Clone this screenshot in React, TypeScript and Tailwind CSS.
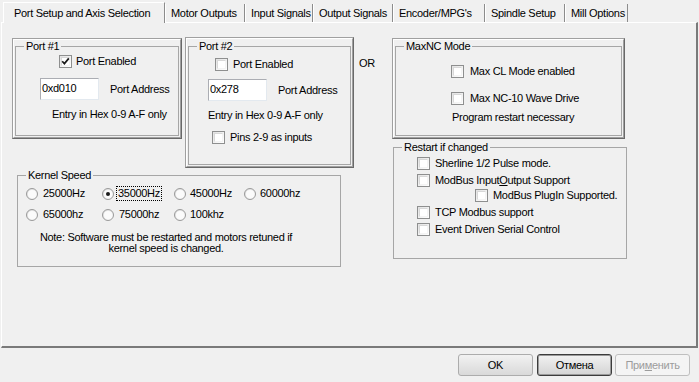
import React from "react";

function Check({ checked = false }: { checked?: boolean }) {
  return (
    <span className="relative inline-block w-[13px] h-[13px] shrink-0 border border-[#8e8f8f] bg-gradient-to-br from-[#e2e2e2] to-[#ffffff]">
      <span className="absolute inset-[1px] bg-white border border-t-[#d8d8d8] border-l-[#d8d8d8] border-r-[#f4f4f4] border-b-[#f4f4f4]" />
      {checked && (
        <svg className="absolute left-[1px] top-[1px]" width="9" height="9" viewBox="0 0 9 9">
          <path d="M1.2 4.2 L3.4 6.6 L7.8 1.4" fill="none" stroke="#1a1a1a" strokeWidth="1.7" />
        </svg>
      )}
    </span>
  );
}

function Radio({ on = false }: { on?: boolean }) {
  return (
    <span className="relative inline-block w-[12px] h-[12px] shrink-0 rounded-full border border-[#9a9a9a] bg-gradient-to-br from-[#dcdcdc] to-[#ffffff]">
      <span className="absolute inset-[1px] rounded-full bg-[#fbfbfb]" />
      {on && <span className="absolute left-[3px] top-[3px] w-[4px] h-[4px] rounded-full bg-[#1b1b1b]" />}
    </span>
  );
}

function Group({
  label,
  className,
  children,
}: {
  label: string;
  className?: string;
  children?: React.ReactNode;
}) {
  return (
    <div className={"relative border border-[#a6a6a6] " + (className ?? "")}>
      <span className="absolute -top-[7px] left-[8px] px-[2px] bg-[#f0f0f0] leading-[13px]">{label}</span>
      {children}
    </div>
  );
}

function Frame({ className, children }: { className?: string; children?: React.ReactNode }) {
  return (
    <div className={"flex border border-t-[#a0a0a0] border-l-[#a0a0a0] border-r-[#696969] border-b-[#696969] " + (className ?? "")}>
      <div className="flex-1 flex flex-col border border-t-white border-l-white border-r-[#a0a0a0] border-b-[#a0a0a0]">
        {children}
      </div>
    </div>
  );
}

function TextBox({ value }: { value: string }) {
  return (
    <div className="w-[59px] h-[22px] shrink-0 bg-white border border-[#abadb3] border-r-[#e3e9ef] border-b-[#e3e9ef] pl-[1px] pt-[3px] leading-[13px]">
      {value}
    </div>
  );
}

function Btn({ children, variant }: { children: React.ReactNode; variant?: "default" | "disabled" }) {
  const base =
    "w-[75px] h-[22px] flex items-center justify-center rounded-[3px] leading-[13px] bg-gradient-to-b ";
  if (variant === "default")
    return (
      <div className={base + "border border-[#3c3c3c] from-[#f2f2f2] to-[#d4d4d4] shadow-[inset_0_0_0_1px_#9a9a9a]"}>
        {children}
      </div>
    );
  if (variant === "disabled")
    return <div className={base + "border border-[#bfbfbf] from-[#f4f4f4] to-[#f4f4f4] text-[#9c9c9c]"}>{children}</div>;
  return <div className={base + "border border-[#acacac] from-[#f2f2f2] to-[#d9d9d9]"}>{children}</div>;
}

const tabs: { t: string; w: string }[] = [
  { t: "Motor Outputs", w: "w-[80px]" },
  { t: "Input Signals", w: "w-[68px]" },
  { t: "Output Signals", w: "w-[80px]" },
  { t: "Encoder/MPG's", w: "w-[92px]" },
  { t: "Spindle Setup", w: "w-[80px]" },
  { t: "Mill Options", w: "w-[63px]" },
];

export default function App() {
  return (
    <div className="w-[699px] h-[382px] overflow-hidden bg-[#f0f0f0] text-black text-[11px] leading-[13px] tracking-[-0.3px] font-['Liberation_Sans',Arial,sans-serif] flex flex-col">
      {/* tab strip */}
      <div className="flex items-end h-[22px] pl-[3px]">
        <div className="relative z-10 w-[162px] h-[21px] -mb-px pl-[10px] pt-[4px] bg-[#f0f0f0] border-l border-t border-white border-r border-r-[#8c8c8c]">
          Port Setup and Axis Selection
        </div>
        {tabs.map((x) => (
          <div
            key={x.t}
            className={"h-[18px] pl-[5px] pt-[3px] border-r border-r-[#8c8c8c] border-l border-l-white whitespace-nowrap " + x.w}
          >
            {x.t}
          </div>
        ))}
      </div>

      {/* tab page */}
      <div className="ml-px w-[697px] h-[326px] border-t border-l border-white border-r-2 border-b-2 border-r-[#7a7a7a] border-b-[#7a7a7a] flex">
        {/* left column */}
        <div className="ml-[10px] mt-[15px] flex flex-col">
          <div className="flex items-start gap-[3px]">
            {/* Port #1 */}
            <Frame className="w-[170px] h-[101px]">
              <Group label="Port #1" className="mx-px mt-[6px] mb-px flex-1 flex flex-col">
                <div className="flex items-center mt-[8px] pl-[43px] gap-[4px]">
                  <Check checked />
                  <span>Port Enabled</span>
                </div>
                <div className="flex items-center mt-[10px] pl-[24px] gap-[11px]">
                  <TextBox value="0xd010" />
                  <span>Port Address</span>
                </div>
                <div className="mt-[8px] pl-[36px]">Entry in Hex 0-9 A-F only</div>
              </Group>
            </Frame>
            {/* Port #2 */}
            <Frame className="w-[169px] h-[131px] -mt-px">
              <Group label="Port #2" className="mx-px mt-[7px] mb-px flex-1 flex flex-col">
                <div className="flex items-center mt-[11px] pl-[26px] gap-[5px]">
                  <Check />
                  <span>Port Enabled</span>
                </div>
                <div className="flex items-center mt-[8px] pl-[19px] gap-[11px]">
                  <TextBox value="0x278" />
                  <span>Port Address</span>
                </div>
                <div className="mt-[8px] pl-[19px]">Entry in Hex 0-9 A-F only</div>
                <div className="flex items-center mt-[9px] pl-[23px] gap-[5px]">
                  <Check />
                  <span>Pins 2-9 as inputs</span>
                </div>
              </Group>
            </Frame>
          </div>

          {/* Kernel speed */}
          <Group label="Kernel Speed" className="ml-[5px] mt-[7px] w-[324px] h-[92px] flex flex-col">
            <div className="flex items-center mt-[11px] pl-[8px]">
              <span className="w-[76px] flex items-center gap-[5px]"><Radio /><span>25000Hz</span></span>
              <span className="w-[72px] flex items-center gap-[4px]">
                <Radio on />
                <span className="outline outline-1 outline-dotted outline-black px-px -ml-px">35000Hz</span>
              </span>
              <span className="w-[70px] flex items-center gap-[4px]"><Radio /><span>45000Hz</span></span>
              <span className="flex items-center gap-[4px]"><Radio /><span>60000hz</span></span>
            </div>
            <div className="flex items-center mt-[8px] pl-[8px]">
              <span className="w-[76px] flex items-center gap-[5px]"><Radio /><span>65000hz</span></span>
              <span className="w-[72px] flex items-center gap-[5px]"><Radio /><span>75000hz</span></span>
              <span className="flex items-center gap-[4px]"><Radio /><span>100khz</span></span>
            </div>
            <div className="mt-[11px] w-[296px] text-center leading-[11px]">
              Note: Software must be restarted and motors retuned if
              <br />
              kernel speed is changed.
            </div>
          </Group>
        </div>

        {/* OR */}
        <div className="ml-[5px] w-[33px] mt-[34px]">OR</div>

        {/* right column */}
        <div className="mt-[15px] flex flex-col">
          <Frame className="w-[233px] h-[101px]">
            <Group label="MaxNC Mode" className="mx-px mt-[6px] mb-px flex-1 flex flex-col">
              <div className="flex items-center mt-[18px] pl-[55px] gap-[6px]">
                <Check />
                <span>Max CL Mode enabled</span>
              </div>
              <div className="flex items-center mt-[14px] pl-[55px] gap-[6px]">
                <Check />
                <span>Max NC-10 Wave Drive</span>
              </div>
              <div className="mt-[6px] pl-[56px]">Program restart necessary</div>
            </Group>
          </Frame>

          <Group label="Restart if changed" className="ml-px mt-[8px] w-[234px] h-[112px] flex flex-col">
            <div className="flex items-center mt-[9px] pl-[23px] gap-[5px]">
              <Check />
              <span>Sherline 1/2 Pulse mode.</span>
            </div>
            <div className="flex items-center mt-[4px] pl-[23px] gap-[5px]">
              <Check />
              <span>
                ModBus Input<u>O</u>utput Support
              </span>
            </div>
            <div className="flex items-center mt-[2px] pl-[81px] gap-[5px]">
              <Check />
              <span>ModBus PlugIn Supported.</span>
            </div>
            <div className="flex items-center mt-[4px] pl-[23px] gap-[5px]">
              <Check />
              <span>TCP Modbus support</span>
            </div>
            <div className="flex items-center mt-[4px] pl-[23px] gap-[5px]">
              <Check />
              <span>Event Driven Serial Control</span>
            </div>
          </Group>
        </div>
      </div>

      {/* buttons */}
      <div className="flex justify-end gap-[3px] mt-[6px] pr-[9px]">
        <div className="mr-px">
          <Btn>OK</Btn>
        </div>
        <Btn variant="default">Отмена</Btn>
        <Btn variant="disabled">
          При<u>м</u>енить
        </Btn>
      </div>
    </div>
  );
}
